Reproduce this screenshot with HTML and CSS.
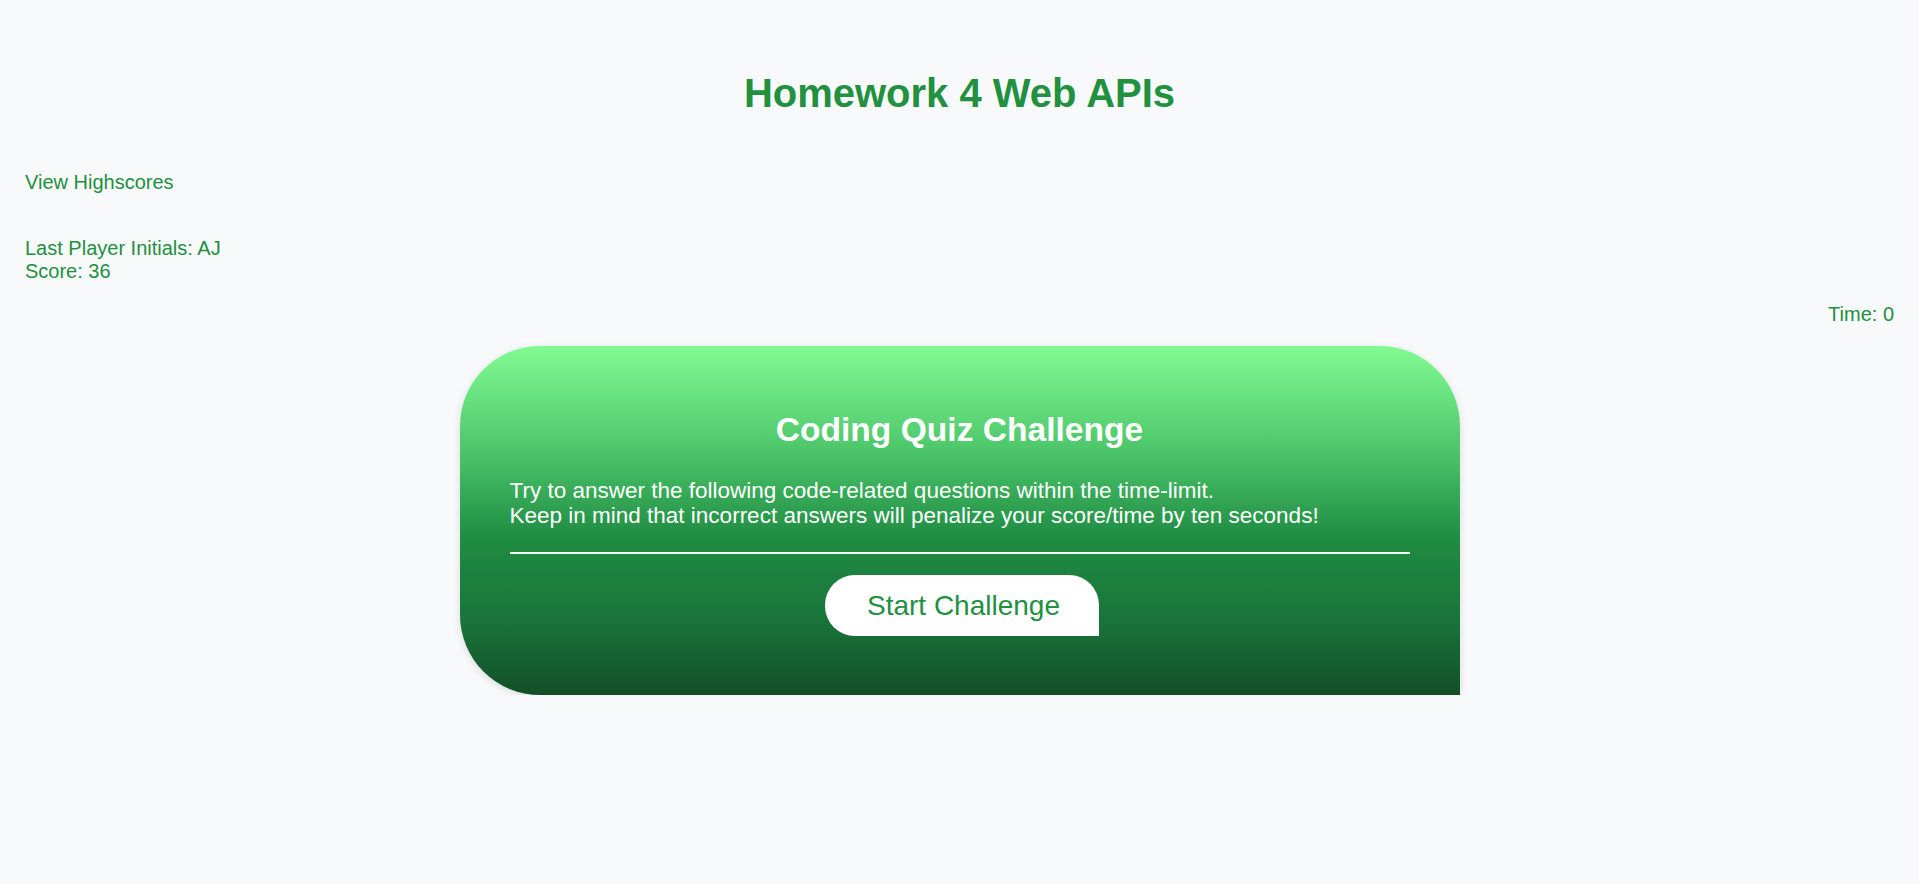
FILE: index.html
```html
<!DOCTYPE html>
<html lang="en">
<head>
<meta charset="utf-8">
<title>Homework 4 Web APIs</title>
<link rel="stylesheet" href="styles.css">
</head>
<body>
  <header class="page-header">
    <h1 class="page-title">Homework 4 Web APIs</h1>
  </header>
  <main class="page">
    <a class="highscores-link" href="#">View Highscores</a>
    <div class="last-player">
      <div>Last Player Initials: AJ</div>
      <div>Score: 36</div>
    </div>
    <div class="timer">Time: 0</div>
    <section class="quiz-card">
      <h2 class="quiz-title">Coding Quiz Challenge</h2>
      <p class="quiz-intro">Try to answer the following code-related questions within the time-limit.<br>Keep in mind that incorrect answers will penalize your score/time by ten seconds!</p>
      <hr class="quiz-rule">
      <div class="quiz-actions">
        <button class="start-btn" type="button">Start Challenge</button>
      </div>
    </section>
  </main>
</body>
</html>
```

FILE: styles.css
```css
* { box-sizing: border-box; }

html, body {
  margin: 0;
  padding: 0;
  background: #f8f9fb;
  font-family: "Liberation Sans", Arial, sans-serif;
  color: #21903f;
}

.page-header {
  padding-top: 70px;
  text-align: center;
}

.page-title {
  margin: 0;
  font-size: 40px;
  font-weight: 700;
  color: #21913f;
  line-height: 46px;
}

.page {
  padding: 55px 25px 0 25px;
  display: flex;
  flex-direction: column;
  font-size: 20px;
  line-height: 23px;
}

.highscores-link {
  color: #21903f;
  text-decoration: none;
  align-self: flex-start;
}

.last-player {
  margin-top: 43px;
}

.timer {
  margin-top: 20px;
  align-self: flex-end;
}

.quiz-card {
  align-self: center;
  width: 1000px;
  margin-top: 20px;
  padding: 65px 50px 59px 50px;
  border-radius: 80px 80px 0 80px;
  background: linear-gradient(180deg, #82fa93 0%, #4cc66a 30%, #1f8c43 55%, #1a753a 78%, #134f27 100%);
  box-shadow: 0 2px 8px rgba(0, 0, 0, 0.12);
  color: #ffffff;
  font-size: 22.5px;
}

.quiz-title {
  margin: 0;
  text-align: center;
  font-size: 33.6px;
  line-height: 38px;
  font-weight: 700;
}

.quiz-intro {
  margin: 29px 0 0 0;
  line-height: 25px;
}

.quiz-rule {
  margin: 24px 0 0 0;
  border: 0;
  height: 2px;
  background: #f4f4f4;
}

.quiz-actions {
  display: flex;
  justify-content: center;
  margin-top: 21px;
}

.start-btn {
  width: 274px;
  height: 61px;
  margin-left: 4px;
  border: 0;
  border-radius: 30px 30px 0 30px;
  background: #ffffff;
  color: #21903f;
  font-family: "Liberation Sans", Arial, sans-serif;
  font-size: 28px;
  padding: 0 0 0 4px;
  cursor: pointer;
}
```
